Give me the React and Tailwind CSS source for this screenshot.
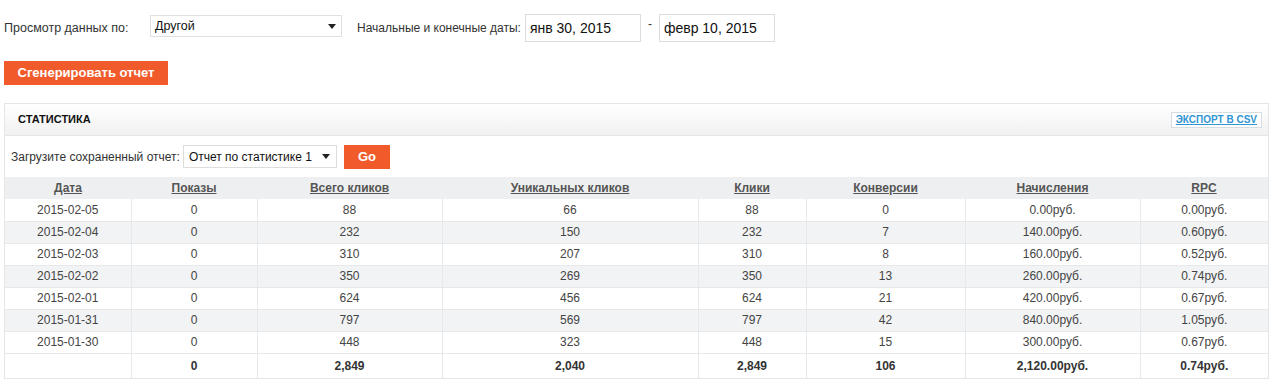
import React from 'react';

const rows = [
  ['2015-02-05', '0', '88', '66', '88', '0', '0.00руб.', '0.00руб.'],
  ['2015-02-04', '0', '232', '150', '232', '7', '140.00руб.', '0.60руб.'],
  ['2015-02-03', '0', '310', '207', '310', '8', '160.00руб.', '0.52руб.'],
  ['2015-02-02', '0', '350', '269', '350', '13', '260.00руб.', '0.74руб.'],
  ['2015-02-01', '0', '624', '456', '624', '21', '420.00руб.', '0.67руб.'],
  ['2015-01-31', '0', '797', '569', '797', '42', '840.00руб.', '1.05руб.'],
  ['2015-01-30', '0', '448', '323', '448', '15', '300.00руб.', '0.67руб.'],
];

const totals = ['', '0', '2,849', '2,040', '2,849', '106', '2,120.00руб.', '0.74руб.'];

const columns = [
  { title: 'Дата', width: 'w-[126px]' },
  { title: 'Показы', width: 'w-[126px]' },
  { title: 'Всего кликов', width: 'w-[185px]' },
  { title: 'Уникальных кликов', width: 'w-[256px]' },
  { title: 'Клики', width: 'w-[108px]' },
  { title: 'Конверсии', width: 'w-[159px]' },
  { title: 'Начисления', width: 'w-[175px]' },
  { title: 'RPC', width: '' },
];

const Caret = () => (
  <svg width="8" height="5" viewBox="0 0 8 5" className="shrink-0">
    <path d="M0 0h8L4 5z" fill="#222" />
  </svg>
);

export default function App() {
  return (
    <div className="bg-white text-[12px] text-[#333] font-['Liberation_Sans',Arial,sans-serif] pl-[4px] pr-[11px] pt-[14px] pb-[10px]">
      {/* filters */}
      <div className="flex items-center h-[28px]">
        <span className="w-[146px] text-[12.5px] text-[#333]">Просмотр данных по:</span>
        <div className="w-[192px] h-[22px] border border-[#e0e0e0] flex items-center justify-between pl-[4px] pr-[5px] text-[#111] text-[12.5px] -mt-[4px]">
          <span>Другой</span>
          <Caret />
        </div>
        <span className="ml-[15px] mr-[4px]">Начальные и конечные даты:</span>
        <div className="w-[116px] h-[28px] border border-[#dcdcdc] flex items-center pl-[4px] text-[#111] text-[14px]">янв 30, 2015</div>
        <span className="w-[18px] text-center -mt-[8px]">-</span>
        <div className="w-[116px] h-[28px] border border-[#dcdcdc] flex items-center pl-[4px] text-[#111] text-[14px]">февр 10, 2015</div>
      </div>

      <button className="mt-[19px] w-[164px] h-[24px] bg-[#f15a2b] text-white font-bold text-[13px] flex items-center justify-center">
        Сгенерировать отчет
      </button>

      {/* panel */}
      <div className="mt-[18px] border border-[#e3e5e7]">
        <div className="h-[32px] flex items-center justify-between pl-[13px] pr-[6px] bg-gradient-to-b from-white to-[#f1f1f1] border-b border-[#e6e6e6]">
          <span className="font-bold text-[11px] text-[#111]">СТАТИСТИКА</span>
          <span className="border border-[#d5dde3] bg-white px-[4px] h-[16px] flex items-center text-[10px] font-bold text-[#3195d3] underline">ЭКСПОРТ В CSV</span>
        </div>

        <div className="h-[41px] flex items-center pl-[6px]">
          <span className="mr-[3px]">Загрузите сохраненный отчет:</span>
          <div className="w-[154px] h-[23px] border border-[#ddd] flex items-center justify-between pl-[5px] pr-[6px] text-[#111]">
            <span>Отчет по статистике 1</span>
            <Caret />
          </div>
          <button className="ml-[7px] w-[46px] h-[24px] bg-[#f15a2b] text-white font-bold text-[13px] flex items-center justify-center">Go</button>
        </div>

        <table className="w-full border-collapse text-[12px]">
          <thead>
            <tr className="bg-[#eeeff0] h-[22px]">
              {columns.map((c) => (
                <th key={c.title} className={`${c.width} font-bold text-[#555] underline p-0 text-center`}>
                  {c.title}
                </th>
              ))}
            </tr>
          </thead>
          <tbody>
            {rows.map((r, i) => (
              <tr key={r[0]} className={`h-[22px] ${i % 2 === 1 ? 'bg-[#f2f3f4]' : 'bg-white'}`}>
                {r.map((v, j) => (
                  <td key={j} className={`p-0 text-center text-[#444] border-b border-[#e6e8ea] ${j > 0 ? 'border-l' : ''}`}>
                    {v}
                  </td>
                ))}
              </tr>
            ))}
            <tr className="h-[25px] bg-white">
              {totals.map((v, j) => (
                <td key={j} className={`p-0 text-center font-bold text-[#333] ${j > 0 ? 'border-l border-[#e6e8ea]' : ''}`}>
                  {v}
                </td>
              ))}
            </tr>
          </tbody>
        </table>
      </div>
    </div>
  );
}
